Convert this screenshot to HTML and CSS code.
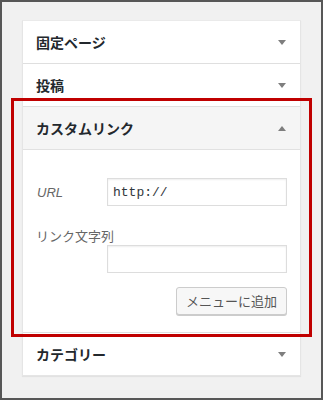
FILE: index.html
```html
<!DOCTYPE html>
<html lang="ja">
<head>
<meta charset="utf-8">
<link rel="stylesheet" href="styles.css">
</head>
<body>
<div class="frame">
  <div class="panel">
    <div class="section">
      <h3 class="title">固定ページ<span class="arrow down"></span></h3>
    </div>
    <div class="section">
      <h3 class="title">投稿<span class="arrow down"></span></h3>
    </div>
    <div class="section open">
      <h3 class="title">カスタムリンク<span class="arrow up"></span></h3>
      <div class="content">
        <div class="field-row">
          <span class="label-url">URL</span>
          <input class="text-input mono" type="text" value="http://">
        </div>
        <div class="label-text">リンク文字列</div>
        <div class="field-row right">
          <input class="text-input" type="text" value="">
        </div>
        <div class="button-row">
          <button class="button" type="button">メニューに追加</button>
        </div>
      </div>
    </div>
    <div class="section last">
      <h3 class="title">カテゴリー<span class="arrow down"></span></h3>
    </div>
  </div>
  <div class="highlight"></div>
</div>
</body>
</html>
```

FILE: styles.css
```css
* { box-sizing: border-box; }
html, body { margin: 0; padding: 0; }
body {
  font-family: "Noto Sans CJK JP", "Noto Sans", sans-serif;
  color: #23282d;
}
.frame {
  position: relative;
  width: 323px;
  height: 400px;
  border: 2px solid #575757;
  background: #f1f1f1;
  padding: 18px 20px 0 20px;
}
.panel {
  background: #fff;
  border: 1px solid #e5e5e5;
  border-top-color: #eaeaea;
  box-shadow: 0 1px 1px rgba(0,0,0,0.06);
}
.section { border-bottom: 1px solid #dfdfdf; }
.section.last { border-bottom: none; }
.title {
  margin: 0;
  height: 42px;
  display: flex;
  align-items: center;
  justify-content: space-between;
  padding: 0 14px 0 13px;
  font-size: 14px;
  font-weight: 700;
  color: #23282d;
  letter-spacing: 0;
}
.open .title {
  background: #f5f5f5;
  border-bottom: 1px solid #e1e1e1;
  height: 43px;
}
.arrow {
  width: 0;
  height: 0;
  border-left: 4px solid transparent;
  border-right: 4px solid transparent;
}
.arrow.down { border-top: 5px solid #7e7e7e; }
.arrow.up { border-bottom: 5px solid #7e7e7e; }
.content {
  padding: 28px 13px 17px 13px;
}
.field-row {
  display: flex;
  align-items: center;
  justify-content: space-between;
}
.field-row.right { justify-content: flex-end; }
.label-url {
  font-family: "Liberation Sans", "Noto Sans", sans-serif;
  font-style: italic;
  font-size: 13px;
  color: #666;
  padding-left: 1px;
}
.text-input {
  width: 180px;
  height: 28px;
  border: 1px solid #ddd;
  box-shadow: inset 0 1px 2px rgba(0,0,0,0.07);
  background: #fff;
  padding: 0 5px;
  font-size: 13px;
  color: #32373c;
  font-family: "Noto Sans", sans-serif;
  outline: none;
}
.text-input.mono {
  font-family: "Liberation Mono", "DejaVu Sans Mono", monospace;
  font-size: 13px;
  color: #32373c;
}
.label-text {
  margin-top: 21px;
  height: 18px;
  line-height: 18px;
  font-size: 13px;
  color: #666;
}
.button-row {
  display: flex;
  justify-content: flex-end;
  margin-top: 14px;
}
.button {
  height: 28px;
  padding: 0 9px 1px;
  font-family: "Noto Sans CJK JP", "Noto Sans", sans-serif;
  font-size: 13px;
  color: #555;
  background: #f7f7f7;
  border: 1px solid #ccc;
  border-radius: 3px;
  box-shadow: 0 1px 0 #ccc;
  margin-right: 0;
}
.highlight {
  position: absolute;
  left: 9px;
  top: 96px;
  width: 301px;
  height: 239px;
  border: 3px solid #c00000;
  pointer-events: none;
}
```
